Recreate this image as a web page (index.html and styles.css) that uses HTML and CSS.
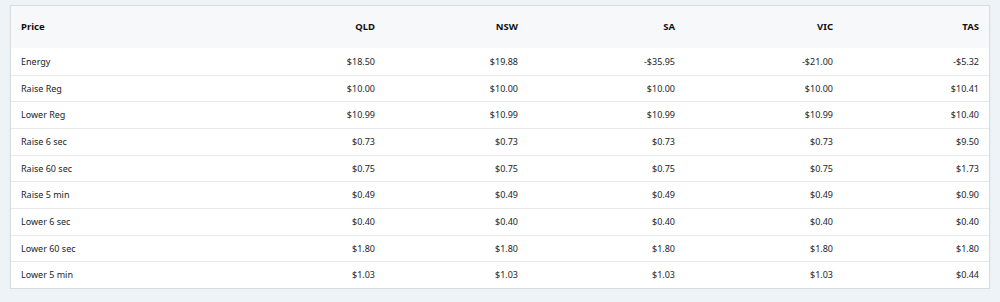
FILE: index.html
```html
<!DOCTYPE html>
<html lang="en">

<head>
    <meta charset="UTF-8">
    <meta name="viewport" content="width=device-width, initial-scale=1.0">
    <title>Regional Prices</title>
    <link rel="stylesheet" href="styles.css">
</head>

<body>
    <div class="price-card">
        <table class="price-table">
            <colgroup>
                <col class="col-name">
                <col class="col-qld">
                <col class="col-nsw">
                <col class="col-sa">
                <col class="col-vic">
                <col class="col-tas">
            </colgroup>
            <thead>
                <tr>
                    <th>Price</th>
                    <th>QLD</th>
                    <th>NSW</th>
                    <th>SA</th>
                    <th>VIC</th>
                    <th>TAS</th>
                </tr>
            </thead>
            <tbody>
                <tr><td>Energy</td><td>$18.50</td><td>$19.88</td><td>-$35.95</td><td>-$21.00</td><td>-$5.32</td></tr>
                <tr><td>Raise Reg</td><td>$10.00</td><td>$10.00</td><td>$10.00</td><td>$10.00</td><td>$10.41</td></tr>
                <tr><td>Lower Reg</td><td>$10.99</td><td>$10.99</td><td>$10.99</td><td>$10.99</td><td>$10.40</td></tr>
                <tr><td>Raise 6 sec</td><td>$0.73</td><td>$0.73</td><td>$0.73</td><td>$0.73</td><td>$9.50</td></tr>
                <tr><td>Raise 60 sec</td><td>$0.75</td><td>$0.75</td><td>$0.75</td><td>$0.75</td><td>$1.73</td></tr>
                <tr><td>Raise 5 min</td><td>$0.49</td><td>$0.49</td><td>$0.49</td><td>$0.49</td><td>$0.90</td></tr>
                <tr><td>Lower 6 sec</td><td>$0.40</td><td>$0.40</td><td>$0.40</td><td>$0.40</td><td>$0.40</td></tr>
                <tr><td>Lower 60 sec</td><td>$1.80</td><td>$1.80</td><td>$1.80</td><td>$1.80</td><td>$1.80</td></tr>
                <tr><td>Lower 5 min</td><td>$1.03</td><td>$1.03</td><td>$1.03</td><td>$1.03</td><td>$0.44</td></tr>
            </tbody>
        </table>
    </div>
</body>

</html>
```

FILE: styles.css
```css
* {
    margin: 0;
    padding: 0;
    box-sizing: border-box;
    font-family: 'Noto Sans', sans-serif;
}

body {
    background: #eef3f8;
    padding: 5px 10px 0 10px;
}

.price-card {
    width: 980px;
    background: #fff;
    border: 1px solid #d9dde2;
    box-shadow: 0 1px 2px rgba(0, 0, 0, 0.08);
}

.price-table {
    width: 100%;
    border-collapse: collapse;
    table-layout: fixed;
    font-size: 9px;
    color: #212529;
}

.col-name { width: 230px; }
.col-qld { width: 144px; }
.col-nsw { width: 143px; }
.col-sa { width: 157px; }
.col-vic { width: 158px; }
.col-tas { width: 146px; }

.price-table th {
    background: #f7f8fa;
    font-size: 9.5px;
    font-weight: bold;
    text-align: right;
    padding: 14px 10px;
    line-height: 14px;
    color: #111;
}

.price-table td {
    text-align: right;
    padding: 6px 10px;
    line-height: 13.67px;
    border-top: 1px solid #e6e8eb;
}

.price-table tbody tr:first-child td {
    border-top: none;
    padding-top: 6.5px;
    padding-bottom: 6.5px;
}

.price-table th:first-child,
.price-table td:first-child {
    text-align: left;
}
```
